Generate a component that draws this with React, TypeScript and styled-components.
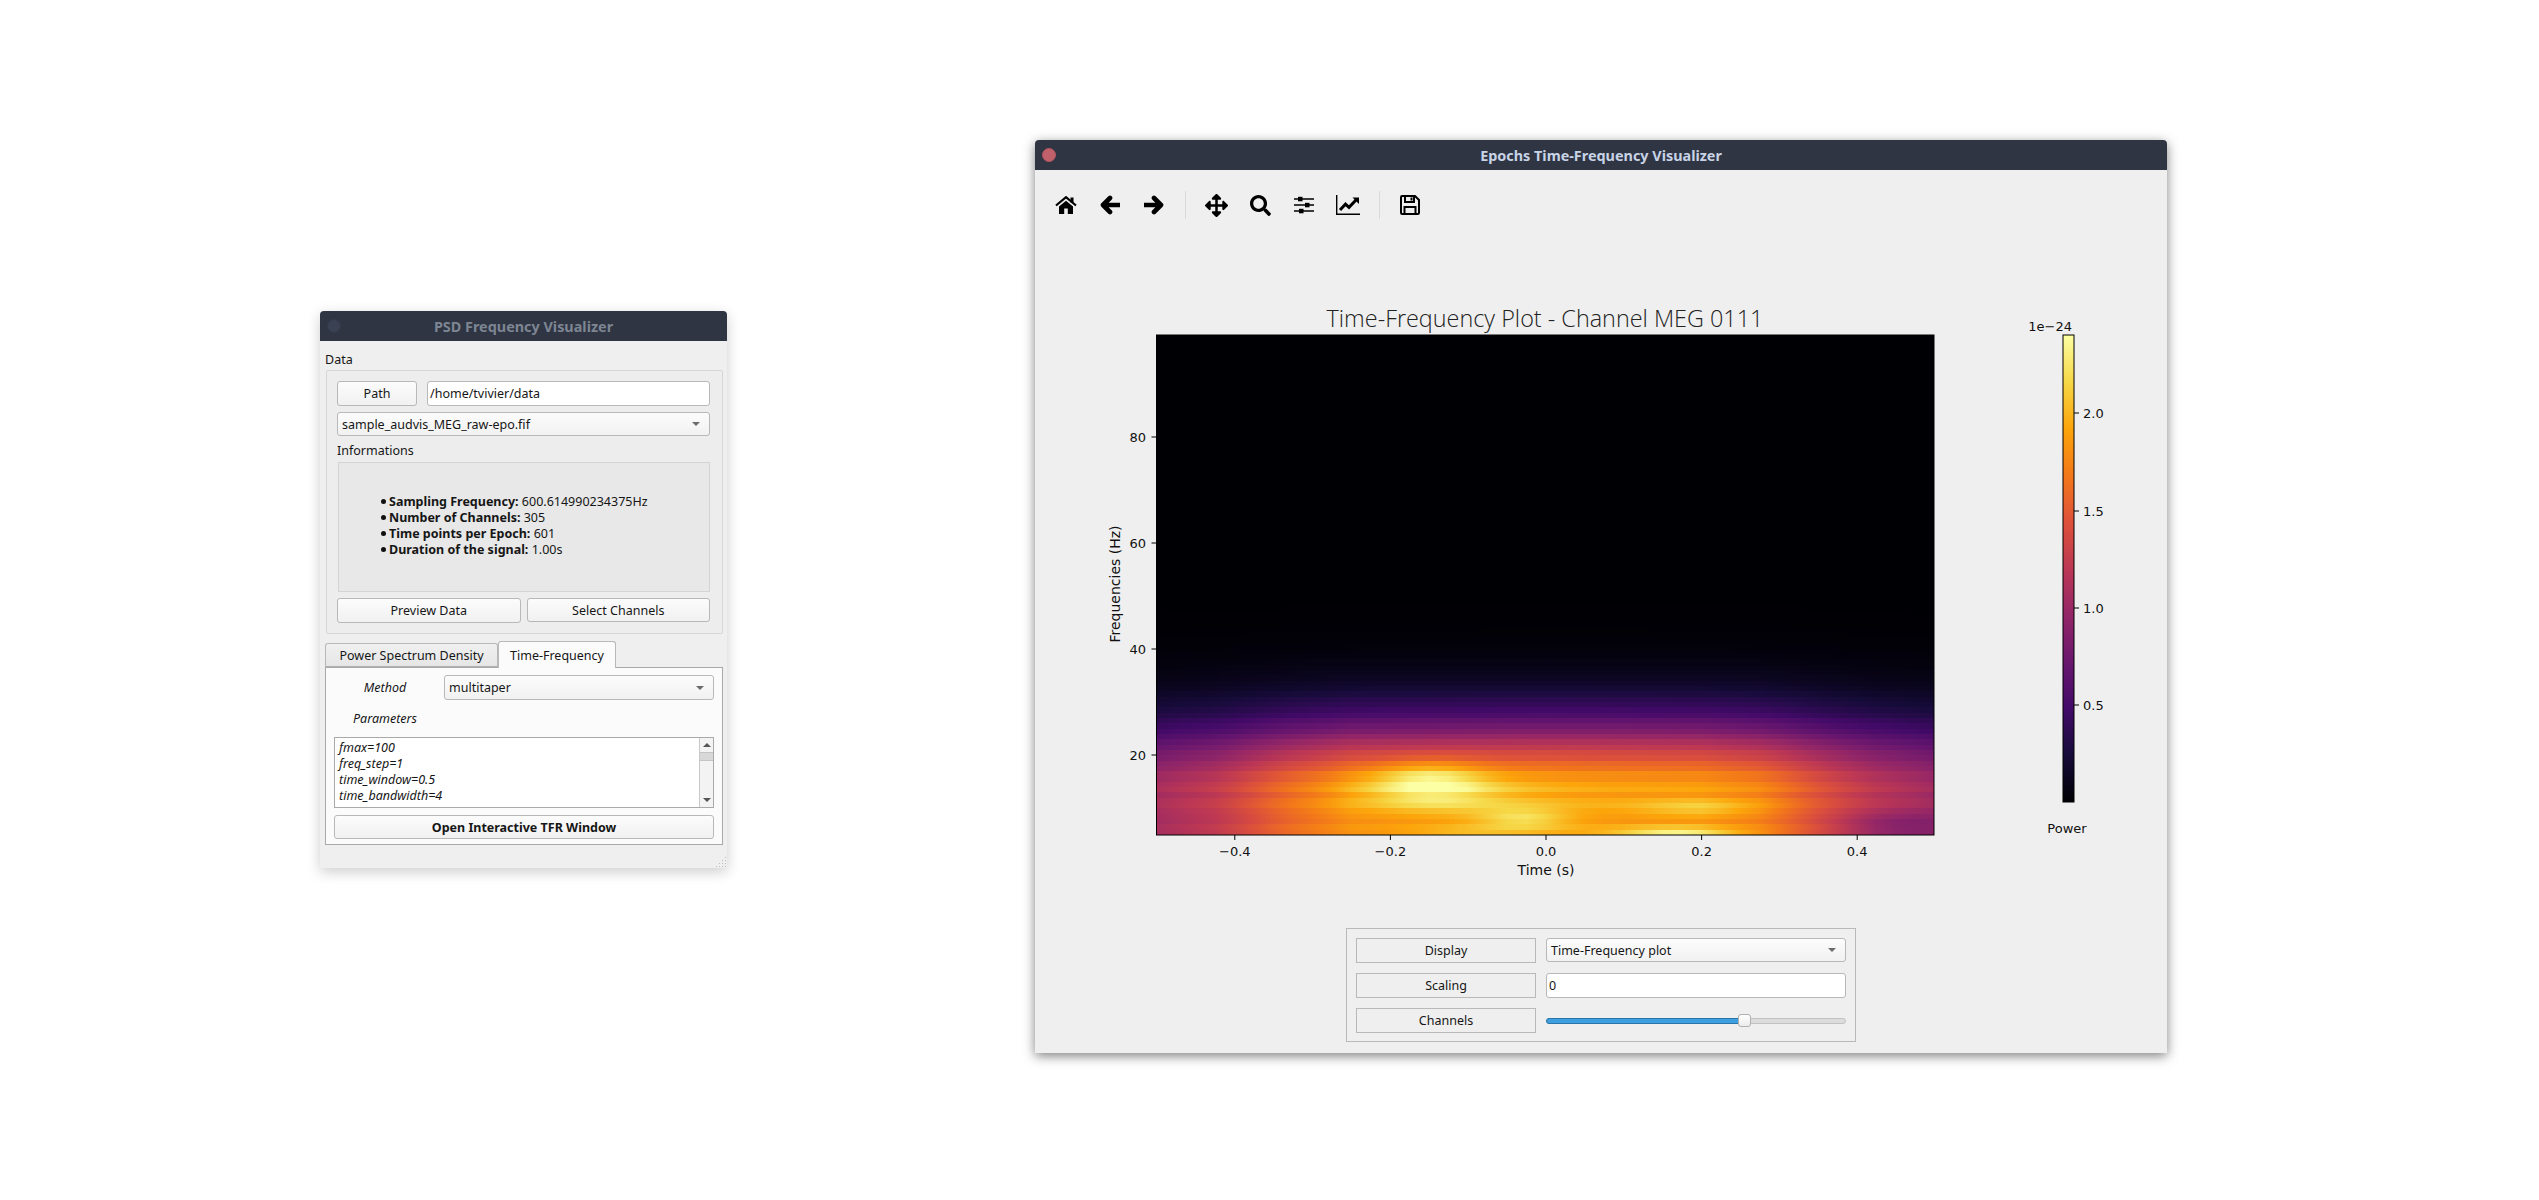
import React from 'react';
import styled, { createGlobalStyle } from 'styled-components';
import { FaArrowsAlt, FaSearch } from 'react-icons/fa';

const uiFont = `"Noto Sans", "Open Sans", sans-serif`;
const plotFont = `"DejaVu Sans", sans-serif`;

const GlobalStyle = createGlobalStyle`
  html, body { margin: 0; padding: 0; background: #fff; }
  body { font-family: ${uiFont}; font-size: 12.5px; color: #161616; }
  * { box-sizing: border-box; }
`;

const Desktop = styled.div`
  position: relative;
  width: 2539px;
  height: 1200px;
  overflow: hidden;
  background: #fff;
`;

const Win = styled.div<{ $x: number; $y: number; $w: number; $h: number; $focused?: boolean }>`
  position: absolute;
  left: ${p => p.$x}px;
  top: ${p => p.$y}px;
  width: ${p => p.$w}px;
  height: ${p => p.$h}px;
  background: #efefef;
  border-radius: 4px 4px 0 0;
  display: flex;
  flex-direction: column;
  box-shadow: ${p => (p.$focused ? '0 3px 12px rgba(0,0,0,.5)' : '0 4px 14px rgba(0,0,0,.2)')};
`;

const TitleBar = styled.div<{ $focused?: boolean }>`
  position: relative;
  height: 30px;
  flex: none;
  background: #2f3542;
  border-radius: 4px 4px 0 0;
  display: flex;
  align-items: center;
  justify-content: center;
  font-weight: 700;
  font-size: 14.4px;
  color: ${p => (p.$focused ? '#c8d3e6' : '#7d8593')};
`;

const CloseDot = styled.span<{ $focused?: boolean }>`
  position: absolute;
  left: 7px;
  top: 8px;
  width: 14px;
  height: 14px;
  border-radius: 50%;
  background: ${p => (p.$focused ? '#c0616b' : '#3a4152')};
  border: 1px solid ${p => (p.$focused ? '#b5555f' : '#343a4a')};
`;

const Caption = styled.div`
  flex: none;
  height: 18px;
  line-height: 17px;
  margin: 10px 0 1px 5px;
`;

const GroupBox = styled.div`
  flex: none;
  margin: 0 4px 0 6px;
  height: 264px;
  padding: 10px 12px 10px 10px;
  border: 1px solid #d6d6d6;
  border-radius: 2px;
  background: #ededed;
  display: flex;
  flex-direction: column;
`;

const Row = styled.div`
  flex: none;
  display: flex;
  gap: 10px;
  height: 25px;
`;

const ComboRow = styled(Row)`
  margin-top: 6px;
  height: 24px;
`;

const ButtonRow = styled(Row)`
  gap: 6px;
`;

const buttonLook = `
  border: 1px solid #b8b8b8;
  border-radius: 3px;
  background: linear-gradient(#fcfcfc, #f1f1f1);
  color: #161616;
`;

const PushButton = styled.div<{ $w?: number; $bold?: boolean; $h?: number }>`
  ${buttonLook}
  flex: ${p => (p.$w ? `0 0 ${p.$w}px` : '1')};
  height: ${p => p.$h ?? 25}px;
  display: flex;
  align-items: center;
  justify-content: center;
  font-weight: ${p => (p.$bold ? 700 : 400)};
`;

const TextInput = styled.div`
  flex: 1;
  height: 25px;
  line-height: 23px;
  padding: 0 2px;
  background: #fff;
  border: 1px solid #b8b8b8;
  border-radius: 3px;
`;

const Combo = styled.div<{ $h?: number }>`
  ${buttonLook}
  flex: 1;
  height: ${p => p.$h ?? 24}px;
  display: flex;
  align-items: center;
  justify-content: space-between;
  padding: 0 9px 0 4px;
`;

const ComboArrow = styled.span`
  width: 0;
  height: 0;
  border-left: 4px solid transparent;
  border-right: 4px solid transparent;
  border-top: 4px solid #6b6b6b;
`;

const InfoLabel = styled.div`
  flex: none;
  height: 26px;
  line-height: 29px;
`;

const InfoFrame = styled.div`
  flex: none;
  height: 130px;
  margin-left: 1px;
  margin-bottom: 6px;
  padding-bottom: 2px;
  background: #e8e8e8;
  border: 1px solid #d4d4d4;
  display: flex;
  align-items: center;
`;

const InfoList = styled.ul`
  margin: 0;
  padding: 0 0 0 50px;
  list-style: none;
`;

const InfoItem = styled.li`
  position: relative;
  height: 16px;
  line-height: 16px;
  &::before {
    content: '';
    position: absolute;
    left: -8px;
    top: 5px;
    width: 5px;
    height: 5px;
    border-radius: 50%;
    background: #111;
  }
  b { font-weight: 700; }
`;

const TabBar = styled.div`
  flex: none;
  display: flex;
  align-items: flex-end;
  height: 26px;
  margin: 7px 0 0 5px;
`;

const Tab = styled.div<{ $active?: boolean }>`
  display: flex;
  align-items: center;
  justify-content: center;
  position: relative;
  height: ${p => (p.$active ? 27 : 24)}px;
  width: ${p => (p.$active ? 118 : 173)}px;
  margin-bottom: ${p => (p.$active ? -1 : 0)}px;
  background: ${p => (p.$active ? '#fbfbfb' : 'linear-gradient(#f0f0f0, #e6e6e6)')};
  border: 1px solid #b8b8b8;
  border-bottom: ${p => (p.$active ? 'none' : '1px solid #b0b0b0')};
  border-radius: 3px 3px 0 0;
`;

const TabPane = styled.div`
  flex: none;
  margin: 0 4px 0 5px;
  height: 178px;
  padding: 7px 8px 5px;
  background: #fbfbfb;
  border: 1px solid #a9a9a9;
  display: flex;
  flex-direction: column;
`;

const FormRow = styled.div`
  flex: none;
  display: flex;
  align-items: center;
  gap: 8px;
`;

const FormLabel = styled.div`
  flex: 0 0 102px;
  text-align: center;
  font-style: italic;
`;

const ParamLabel = styled(FormLabel)`
  flex: none;
  width: 102px;
  height: 37px;
  line-height: 38px;
`;

const ParamBox = styled.div`
  flex: none;
  height: 71px;
  border: 1px solid #a9a9a9;
  background: #fff;
  display: flex;
  overflow: hidden;
`;

const ParamText = styled.div`
  flex: 1;
  padding: 2px 0 0 4px;
  font-style: italic;
  line-height: 16px;
`;

const ScrollBar = styled.div`
  position: relative;
  flex: 0 0 14px;
  background: #f3f3f3;
  border-left: 1px solid #c8c8c8;
  display: flex;
  flex-direction: column;
  justify-content: space-between;
  align-items: center;
  padding: 5px 0;
`;

const ScrollThumb = styled.div`
  position: absolute;
  left: 0;
  right: 0;
  top: 14px;
  height: 9px;
  background: #d8d8d8;
  border-top: 1px solid #c4c4c4;
  border-bottom: 1px solid #c4c4c4;
`;

const ScrollArrow = styled.span<{ $up?: boolean }>`
  width: 0;
  height: 0;
  border-left: 4px solid transparent;
  border-right: 4px solid transparent;
  ${p => (p.$up ? 'border-bottom: 4px solid #555;' : 'border-top: 4px solid #555;')}
`;

const OpenRow = styled.div`
  flex: none;
  display: flex;
  margin-top: 7px;
`;

const SizeGrip = styled.div`
  position: absolute;
  right: 1px;
  bottom: 1px;
  width: 11px;
  height: 11px;
  background: radial-gradient(circle, #bdbdbd 0.8px, transparent 1px) 0 0 / 3px 3px;
  clip-path: polygon(100% 0, 100% 100%, 0 100%);
`;

const Toolbar = styled.div`
  flex: none;
  height: 70px;
  display: flex;
  align-items: center;
  padding-left: 9px;
`;

const ToolButton = styled.div`
  flex: 0 0 44px;
  display: flex;
  justify-content: center;
  align-items: center;
  color: #000;
`;

const ToolSep = styled.div`
  width: 1px;
  height: 28px;
  margin: 0 8px 0 9px;
  background: #dadada;
`;

const Figure = styled.svg`
  display: block;
  flex: none;
`;

const ControlPanel = styled.div`
  align-self: center;
  width: 510px;
  height: 114px;
  padding: 9px;
  border: 1px solid #b9b9b9;
  display: grid;
  grid-template-columns: 180px 300px;
  grid-auto-rows: 25px;
  column-gap: 10px;
  row-gap: 10px;
`;

const FlatLabel = styled.div`
  border: 1px solid #b9b9b9;
  display: flex;
  align-items: center;
  justify-content: center;
`;

const SliderWrap = styled.div`
  position: relative;
  display: flex;
  align-items: center;
`;

const SliderTrack = styled.div`
  width: 100%;
  height: 6px;
  border-radius: 3px;
  border: 1px solid #c2c2c2;
  background: #dcdcdc;
  position: relative;
`;

const SliderFill = styled.div`
  position: absolute;
  left: -1px;
  top: -1px;
  height: 6px;
  border: 1px solid #2a76a8;
  border-radius: 3px 0 0 3px;
  background: #3d9fe0;
`;

const SliderHandle = styled.div`
  position: absolute;
  top: 6px;
  width: 13px;
  height: 13px;
  margin-left: -6px;
  border: 1px solid #b0b0b0;
  border-radius: 3px;
  background: linear-gradient(#fefefe, #ececec);
`;

const PlotText = styled.text<{ $size?: number }>`
  font-family: ${plotFont};
  font-size: ${p => p.$size ?? 13}px;
  fill: #111;
`;

const PlotTitle = styled.text`
  font-family: "Open Sans", sans-serif;
  font-weight: 300;
  font-size: 23.4px;
  fill: #222;
`;

// matplotlib toolbar icons
const HomeIcon = () => (
  <svg width="22" height="18" viewBox="0 0 22 18">
    <path d="M1 9.5 11 1.2 21 9.5" fill="none" stroke="#000" strokeWidth="2.2" />
    <rect x="15.5" y="1.5" width="3" height="5" fill="#000" />
    <path d="M4 10.6 11 4.8 18 10.6V18H12.8V12.6H9.2V18H4Z" fill="#000" />
  </svg>
);

const LeftArrowIcon = () => (
  <svg width="20" height="20" viewBox="0 0 20 20">
    <path d="M10 3 3 10 10 17M4 10H19" fill="none" stroke="#000" strokeWidth="4.6" strokeLinejoin="round" strokeLinecap="round" />
  </svg>
);

const RightArrowIcon = () => (
  <svg width="20" height="20" viewBox="0 0 20 20">
    <path d="M10 3 17 10 10 17M16 10H1" fill="none" stroke="#000" strokeWidth="4.6" strokeLinejoin="round" strokeLinecap="round" />
  </svg>
);

const SlidersIcon = () => (
  <svg width="20" height="18" viewBox="0 0 20 18">
    <path d="M0 3H20M0 9H20M0 15H20" stroke="#000" strokeWidth="1.6" />
    <rect x="4" y="0.8" width="4.5" height="4.5" fill="#000" />
    <rect x="11" y="6.8" width="4.5" height="4.5" fill="#000" />
    <rect x="5" y="12.8" width="4.5" height="4.5" fill="#000" />
  </svg>
);

const ChartIcon = () => (
  <svg width="24" height="20" viewBox="0 0 24 20">
    <path d="M.7 0V19.2H24" fill="none" stroke="#000" strokeWidth="1.4" />
    <path d="M4 15 9.5 9.2 13 12.4 20 5" fill="none" stroke="#000" strokeWidth="3" />
    <path d="M16.5 2.5H23V9Z" fill="#000" />
  </svg>
);

const SaveIcon = () => (
  <svg width="20" height="20" viewBox="0 0 20 20">
    <path d="M1 2.2Q1 1 2.2 1H15L19 5V17.8Q19 19 17.8 19H2.2Q1 19 1 17.8Z" fill="none" stroke="#000" strokeWidth="2" />
    <path d="M5 1V7H14V1" fill="none" stroke="#000" strokeWidth="2" />
    <rect x="10.5" y="2.5" width="2" height="3" fill="#000" />
    <path d="M4.5 19V12H15.5V19" fill="none" stroke="#000" strokeWidth="2" />
  </svg>
);

// inferno colormap, sampled every 0.1
const INFERNO = ['#000004', '#160b39', '#420a68', '#6a176e', '#932667', '#bc3754', '#dd513a', '#f37819', '#fca50a', '#f6d746', '#fcffa4'];

const rgbOf = (hex: string) => [1, 3, 5].map(i => parseInt(hex.slice(i, i + 2), 16));

const inferno = (v: number) => {
  const c = Math.max(0, Math.min(0.9999, v)) * 10;
  const i = Math.floor(c);
  const a = rgbOf(INFERNO[i]);
  const b = rgbOf(INFERNO[i + 1]);
  const m = a.map((x, k) => Math.round(x + (b[k] - x) * (c - i)));
  return `rgb(${m[0]},${m[1]},${m[2]})`;
};

const lerpTable = (table: number[][], x: number) => {
  for (let i = 0; i < table.length - 1; i++) {
    if (x <= table[i + 1][0]) {
      const t = (x - table[i][0]) / (table[i + 1][0] - table[i][0]);
      return table[i][1] + (table[i + 1][1] - table[i][1]) * t;
    }
  }
  return table[table.length - 1][1];
};

const TIME_ENV = [[-0.5, 0.52], [-0.42, 0.6], [-0.34, 0.76], [-0.25, 0.88], [0, 0.92], [0.2, 0.9], [0.28, 0.84], [0.36, 0.68], [0.42, 0.58], [0.5, 0.5]];

// [t, f, sigma t, sigma f, amplitude]
const BLOBS = [
  [-0.15, 15, 0.07, 3.5, 0.18],
  [-0.14, 12, 0.11, 4, 0.12],
  [-0.03, 7.5, 0.06, 2, 0.15],
  [0.17, 5, 0.08, 1, 0.2],
  [0.2, 9.5, 0.08, 1.8, 0.09],
  [-0.1, 5, 0.08, 1.2, 0.06],
  [0.45, 6, 0.08, 3, -0.1],
];

const jitter = (n: number) => {
  const s = Math.sin(n * 12.9898) * 43758.5453;
  return s - Math.floor(s);
};

const power = (t: number, f: number) => {
  const fProfile = f <= 12 ? 1 : Math.exp(-(((f - 12) / 13.7) ** 2));
  let v = 0.86 * fProfile * lerpTable(TIME_ENV, t);
  for (const [bt, bf, st, sf, amp] of BLOBS) {
    v += amp * Math.exp(-(((t - bt) / st) ** 2) - ((f - bf) / sf) ** 2);
  }
  const stripe = 1 + (jitter(Math.round(f)) - 0.5) * 0.08;
  return v * stripe;
};

const ROW_COUNT = 94;
const STOPS = 40;
const rows = Array.from({ length: ROW_COUNT }, (_, r) => {
  const f = 5 + r;
  return {
    f,
    stops: Array.from({ length: STOPS + 1 }, (_, s) => inferno(power(-0.5 + s / STOPS, f))),
  };
});

const AX = { left: 1156.5, right: 1934, top: 335, bottom: 835 };
const xOf = (t: number) => 1546 + t * 778;
const yOf = (hz: number) => 755 - (hz - 20) * 5.3;

const Plot: React.FC = () => {
  const rowH = (AX.bottom - AX.top) / ROW_COUNT;
  return (
    <Figure width={1132} height={688} viewBox="1035 240 1132 688">
      <defs>
        {rows.map(row => (
          <linearGradient key={row.f} id={`row${row.f}`}>
            {row.stops.map((c, i) => (
              <stop key={i} offset={i / STOPS} stopColor={c} />
            ))}
          </linearGradient>
        ))}
        <linearGradient id="cbar" x1="0" y1="1" x2="0" y2="0">
          {INFERNO.map((c, i) => (
            <stop key={c} offset={i / 10} stopColor={c} />
          ))}
        </linearGradient>
      </defs>

      <PlotTitle x={1545} y={327} textAnchor="middle">Time-Frequency Plot - Channel MEG 0111</PlotTitle>

      <rect x={AX.left} y={AX.top} width={AX.right - AX.left} height={AX.bottom - AX.top} fill="#000004" />
      {rows.map((row, r) => (
        <rect
          key={row.f}
          x={AX.left}
          y={Math.round(AX.bottom - (r + 1) * rowH)}
          width={AX.right - AX.left}
          height={Math.round(AX.bottom - r * rowH) - Math.round(AX.bottom - (r + 1) * rowH)}
          fill={`url(#row${row.f})`}
        />
      ))}
      <rect x={AX.left} y={AX.top} width={AX.right - AX.left} height={AX.bottom - AX.top} fill="none" stroke="#000" />

      {[-0.4, -0.2, 0, 0.2, 0.4].map(t => (
        <g key={t}>
          <line x1={xOf(t)} x2={xOf(t)} y1={835} y2={840} stroke="#000" />
          <PlotText x={xOf(t)} y={856} textAnchor="middle">{t < 0 ? `\u2212${(-t).toFixed(1)}` : t.toFixed(1)}</PlotText>
        </g>
      ))}
      <PlotText $size={14} x={1546} y={875} textAnchor="middle">Time (s)</PlotText>

      {[20, 40, 60, 80].map(hz => (
        <g key={hz}>
          <line x1={1151.5} x2={1156.5} y1={yOf(hz)} y2={yOf(hz)} stroke="#000" />
          <PlotText x={1146} y={yOf(hz) + 5} textAnchor="end">{hz}</PlotText>
        </g>
      ))}
      <PlotText $size={14} transform="translate(1120 584) rotate(-90)" textAnchor="middle">Frequencies (Hz)</PlotText>

      <rect x={2063} y={335} width={11} height={467} fill="url(#cbar)" stroke="#000" />
      {[[2.0, 413], [1.5, 511], [1.0, 608], [0.5, 705]].map(([v, y]) => (
        <g key={v}>
          <line x1={2074} x2={2079} y1={y} y2={y} stroke="#000" />
          <PlotText x={2083} y={y + 5}>{v.toFixed(1)}</PlotText>
        </g>
      ))}
      <PlotText x={2072} y={331} textAnchor="end">1e{'\u2212'}24</PlotText>
      <PlotText x={2067} y={833} textAnchor="middle">Power</PlotText>
    </Figure>
  );
};

const CHANNEL_POS = 0.66;

const App: React.FC = () => (
  <Desktop>
    <GlobalStyle />

    <Win $x={320} $y={311} $w={407} $h={557}>
      <TitleBar>
        <CloseDot />
        PSD Frequency Visualizer
      </TitleBar>
      <Caption>Data</Caption>
      <GroupBox>
        <Row>
          <PushButton $w={80}>Path</PushButton>
          <TextInput>/home/tvivier/data</TextInput>
        </Row>
        <ComboRow>
          <Combo>
            sample_audvis_MEG_raw-epo.fif
            <ComboArrow />
          </Combo>
        </ComboRow>
        <InfoLabel>Informations</InfoLabel>
        <InfoFrame>
          <InfoList>
            <InfoItem><b>Sampling Frequency:</b> 600.614990234375Hz</InfoItem>
            <InfoItem><b>Number of Channels:</b> 305</InfoItem>
            <InfoItem><b>Time points per Epoch:</b> 601</InfoItem>
            <InfoItem><b>Duration of the signal:</b> 1.00s</InfoItem>
          </InfoList>
        </InfoFrame>
        <ButtonRow>
          <PushButton>Preview Data</PushButton>
          <PushButton $h={24}>Select Channels</PushButton>
        </ButtonRow>
      </GroupBox>
      <TabBar>
        <Tab>Power Spectrum Density</Tab>
        <Tab $active>Time-Frequency</Tab>
      </TabBar>
      <TabPane>
        <FormRow>
          <FormLabel>Method</FormLabel>
          <Combo $h={25}>
            multitaper
            <ComboArrow />
          </Combo>
        </FormRow>
        <ParamLabel>Parameters</ParamLabel>
        <ParamBox>
          <ParamText>
            fmax=100<br />freq_step=1<br />time_window=0.5<br />time_bandwidth=4
          </ParamText>
          <ScrollBar>
            <ScrollArrow $up />
            <ScrollThumb />
            <ScrollArrow />
          </ScrollBar>
        </ParamBox>
        <OpenRow>
          <PushButton $bold $h={24}>Open Interactive TFR Window</PushButton>
        </OpenRow>
      </TabPane>
      <SizeGrip />
    </Win>

    <Win $x={1035} $y={140} $w={1132} $h={913} $focused>
      <TitleBar $focused>
        <CloseDot $focused />
        Epochs Time-Frequency Visualizer
      </TitleBar>
      <Toolbar>
        <ToolButton><HomeIcon /></ToolButton>
        <ToolButton><LeftArrowIcon /></ToolButton>
        <ToolButton><RightArrowIcon /></ToolButton>
        <ToolSep />
        <ToolButton><FaArrowsAlt size={23} /></ToolButton>
        <ToolButton><FaSearch size={21} /></ToolButton>
        <ToolButton><SlidersIcon /></ToolButton>
        <ToolButton><ChartIcon /></ToolButton>
        <ToolSep />
        <ToolButton><SaveIcon /></ToolButton>
      </Toolbar>
      <Plot />
      <ControlPanel>
        <FlatLabel>Display</FlatLabel>
        <Combo>
          Time-Frequency plot
          <ComboArrow />
        </Combo>
        <FlatLabel>Scaling</FlatLabel>
        <TextInput>0</TextInput>
        <FlatLabel>Channels</FlatLabel>
        <SliderWrap>
          <SliderTrack>
            <SliderFill style={{ width: `${CHANNEL_POS * 100}%` }} />
          </SliderTrack>
          <SliderHandle style={{ left: `${CHANNEL_POS * 100}%` }} />
        </SliderWrap>
      </ControlPanel>
    </Win>
  </Desktop>
);

export default App;
